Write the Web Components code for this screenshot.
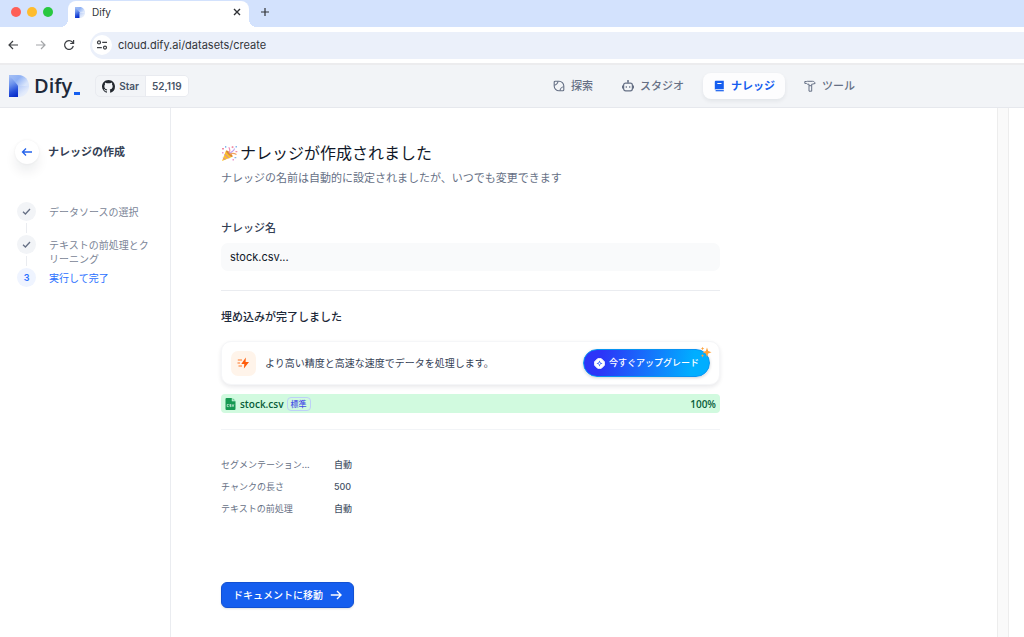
<!DOCTYPE html>
<html lang="ja">
<head>
<meta charset="utf-8">
<meta name="viewport" content="width=device-width, initial-scale=1">
<title>Dify</title>
<style>
  html, body { margin: 0; height: 100%; }
  body { font-family: Inter, "Noto Sans CJK JP", sans-serif; color: #1d2939; background: #fff; }
</style>
</head>
<body>
<dify-page></dify-page>
<script>
function define(name, html, setup) {
  const template = document.createElement('template');
  template.innerHTML = html;
  customElements.define(name, class extends HTMLElement {
    constructor() {
      super();
      this.attachShadow({ mode: 'open' }).append(template.content.cloneNode(true));
    }
    connectedCallback() { if (setup) setup(this, this.shadowRoot); }
  });
}

/* Product mark, shared by the tab and the header */
define('dify-mark', `
  <style>
    :host { display: block; flex: none; width: 20px; height: 22px; }
    svg { display: block; width: 100%; height: 100%; }
  </style>
  <svg viewBox="0 0 20 22" aria-hidden="true">
    <defs>
      <linearGradient id="stem" x1=".3" y1="0" x2=".5" y2="1"><stop offset="0" stop-color="#a5c0f5"/><stop offset=".4" stop-color="#6c92ec"/><stop offset=".75" stop-color="#2650da"/><stop offset="1" stop-color="#0a2fcb"/></linearGradient>
      <linearGradient id="bowl" x1="0" y1="0" x2="1" y2=".5"><stop offset="0" stop-color="#a5c0f5"/><stop offset=".5" stop-color="#8fb1f4"/><stop offset="1" stop-color="#d9e5fb"/></linearGradient>
      <linearGradient id="shade" x1="0" y1="0" x2=".8" y2="1"><stop offset="0" stop-color="#b4caf8"/><stop offset=".6" stop-color="#e0e9fb"/><stop offset="1" stop-color="#eff3fb"/></linearGradient>
    </defs>
    <path d="M9 11H20C20 17 16 22 9.500 22H9Z" fill="url(#shade)"/>
    <path d="M0 0H9.500C16 0 20 5 20 11H9L0 6Z" fill="url(#bowl)"/>
    <path d="M0 0 9 10.500V22H0Z" fill="url(#stem)"/>
  </svg>`);

define('browser-tabs', `
  <style>
    :host { display: flex; align-items: flex-end; height: 27px; background: #d3e2fd; color: #303236; }
    .lights { display: flex; gap: 6px; padding: 0 15px 0 11px; align-self: center; margin-bottom: 3px; }
    .lights i { width: 10px; height: 10px; border-radius: 50%; background: var(--c); }
    .tab { position: relative; display: flex; align-items: center; box-sizing: border-box; width: 181px; height: 26px;
      padding: 0 7px 4px; background: #fff; border-radius: 8px 8px 0 0; font-size: 10px; line-height: 14px; }
    .tab::before, .tab::after { content: ""; position: absolute; bottom: 0; width: 8px; height: 8px; }
    .tab::before { right: 100%; background: radial-gradient(circle at 0 0, transparent 8px, #fff 8px); }
    .tab::after { left: 100%; background: radial-gradient(circle at 100% 0, transparent 8px, #fff 8px); }
    dify-mark { width: 10px; height: 11px; margin-right: 7px; }
    span { flex: 1; }
    button { display: flex; padding: 0; border: 0; background: none; color: inherit; }
    .new { align-self: center; margin: 0 0 3px 11px; }
    svg { display: block; fill: none; stroke: currentColor; }
  </style>
  <div class="lights"><i style="--c:#fe5f57"></i><i style="--c:#febc2e"></i><i style="--c:#28c840"></i></div>
  <div class="tab"><dify-mark></dify-mark><span>Dify</span>
    <button aria-label="タブを閉じる"><svg width="10" height="10" viewBox="0 0 10 10" stroke-width="1.400"><path d="m2 2 6 6m0-6L2 8"/></svg></button>
  </div>
  <button class="new" aria-label="新しいタブ"><svg width="10" height="10" viewBox="0 0 10 10" stroke-width="1.200"><path d="M5 1v8M1 5h8"/></svg></button>`);

define('browser-toolbar', `
  <style>
    :host { display: flex; align-items: center; height: 36px; padding-left: 7px; border-bottom: 2px solid #ececee; color: #3c3f43; background: #fff; }
    button { display: flex; flex: none; padding: 0; margin-right: 16px; border: 0; background: none; color: inherit; }
    button[disabled] { color: #a4a6a9; }
    button.reload { margin-right: 15px; }
    svg { display: block; fill: none; stroke: currentColor; stroke-width: 1.200; }
    form { flex: 1; display: flex; align-items: center; height: 27px; padding-left: 2px; border-radius: 14px 0 0 14px; background: #ebf0fa; }
    .site { display: grid; place-items: center; width: 20px; height: 20px; margin-right: 6px; border-radius: 50%; background: #fff; }
    input { flex: 1; min-width: 0; height: 20px; padding: 0; border: 0; outline: 0; background: none; font: 11px/20px Inter, sans-serif; color: #33363b; }
  </style>
  <button aria-label="戻る"><svg width="12" height="12" viewBox="0 0 12 12"><path d="M11 6H2m4-4L2 6l4 4"/></svg></button>
  <button aria-label="進む" disabled><svg width="12" height="12" viewBox="0 0 12 12"><path d="M1 6h9M6 2l4 4-4 4"/></svg></button>
  <button class="reload" aria-label="再読み込み"><svg width="12" height="12" viewBox="0 0 12 12"><path d="M10.300 7A4.400 4.400 0 1 1 9.300 3L10.400 4.200M10.600 1v3.500H7.200"/></svg></button>
  <form>
    <div class="site"><svg width="12" height="12" viewBox="0 0 12 12"><circle cx="3" cy="3.400" r="1.500"/><path d="M6.200 3.400H11M1 8.600h4.800"/><circle cx="9" cy="8.600" r="1.500"/></svg></div>
    <input aria-label="アドレス" value="cloud.dify.ai/datasets/create" spellcheck="false">
  </form>`);

define('github-star', `
  <style>
    :host { display: block; }
    a { display: flex; height: 20px; border: 1px solid #e9ebf0; border-radius: 5px; overflow: hidden; font-size: 10px; font-weight: 600; line-height: 20px; color: #475467; text-decoration: none; }
    span { display: flex; align-items: center; gap: 4px; padding: 0 6px; }
    .count { background: #fff; border-left: 1px solid #e9ebf0; }
    svg { display: block; fill: #24292f; }
  </style>
  <a href="#"><span><svg width="13" height="13" viewBox="0 0 16 16"><path d="M8 0C3.580 0 0 3.580 0 8c0 3.540 2.290 6.530 5.470 7.590.4.070.55-.17.55-.38 0-.19-.01-.82-.01-1.490-2.010.37-2.530-.49-2.690-.94-.09-.23-.48-.94-.82-1.130-.28-.15-.68-.52-.01-.53.63-.01 1.080.58 1.230.82.72 1.210 1.870.87 2.330.66.07-.52.28-.87.51-1.070-1.780-.2-3.640-.89-3.640-3.950 0-.87.31-1.590.82-2.150-.08-.2-.36-1.020.08-2.120 0 0 .67-.21 2.200.82.64-.18 1.320-.27 2-.27s1.360.09 2 .27c1.530-1.040 2.200-.82 2.200-.82.44 1.100.16 1.920.08 2.120.51.56.82 1.270.82 2.150 0 3.070-1.870 3.750-3.650 3.950.29.25.54.73.54 1.480 0 1.070-.01 1.930-.01 2.200 0 .21.15.46.55.38A8.010 8.010 0 0 0 16 8c0-4.420-3.580-8-8-8Z"/></svg>Star</span><span class="count">52,119</span></a>`);

define('nav-item', `
  <style>
    :host { display: block; color: #667085; }
    :host([active]) { color: #155eef; }
    a { display: flex; align-items: center; gap: 6px; height: 26px; padding: 0 10px; border-radius: 8px; color: inherit; font-size: 11px; font-weight: 500; line-height: 16px; text-decoration: none; white-space: nowrap; }
    :host([active]) a { background: #fdfdfe; box-shadow: 0 2px 4px #10182812; font-weight: 700; }
    ::slotted(svg) { display: block; width: 12px; height: 12px; fill: none; stroke: currentColor; }
  </style>
  <a href="#"><slot name="icon"></slot><slot></slot></a>`,
  (host, root) => { if (host.hasAttribute('active')) root.querySelector('a').setAttribute('aria-current', 'page'); });

define('app-header', `
  <style>
    :host { display: flex; align-items: center; height: 42px; padding: 0 159px 0 9px; border-bottom: 1px solid #e6e8ed; background: #f2f4f7; }
    .brand { display: flex; align-items: center; gap: 5px; margin-right: 15px; text-decoration: none; }
    .word { display: flex; align-items: flex-end; gap: 2px; font-family: "Open Sans", sans-serif; font-size: 20px; font-weight: 600; line-height: 24px; color: #1d2939; }
    .word i { width: 6px; height: 3px; margin-bottom: 3px; background: #155eef; }
    nav { display: flex; gap: 9px; margin-left: auto; }
  </style>
  <a class="brand" href="#"><dify-mark></dify-mark><span class="word">Dify<i></i></span></a>
  <github-star></github-star>
  <nav>
    <nav-item><svg slot="icon" viewBox="0 0 12 12" stroke-width="1.100"><path d="M1.200 4.500V2.200a1 1 0 0 1 1-1H6a4.800 4.800 0 0 1 4.800 4.800v3.800a1 1 0 0 1-1 1H6A4.800 4.800 0 0 1 1.200 6Z"/><path d="M1.400 5.200C3 5 4.800 3.200 5 1.400M7 10.600C7.200 8.800 9 7 10.600 6.800"/></svg>探索</nav-item>
    <nav-item><svg slot="icon" viewBox="0 0 12 12" stroke-width="1.200"><rect x="1.600" y="3.200" width="8.800" height="7.600" rx="2"/><path d="M6 3.200V.8M.4 5.500v3M11.600 5.500v3M4.300 6.200v1.500M7.700 6.200v1.500M5 .8h2"/></svg>スタジオ</nav-item>
    <nav-item active><svg slot="icon" viewBox="0 0 12 12"><path d="M2.500.800h8.300v8.400H2.700a1 1 0 0 0-.9.500V2A1.200 1.200 0 0 1 2.500.800Z" fill="currentColor" stroke="none"/><path d="M4.300 3.500h4.200" stroke="#fff"/><path d="M10.800 10.700H2.600" stroke-width="1.200"/></svg>ナレッジ</nav-item>
    <nav-item><svg slot="icon" viewBox="0 0 12 12" stroke-width="1"><path d="M3.300 1.300h5.200c1.500 0 2.300.8 2.600 2.200L8.200 4.200H7.700v7H5V4.200H3.300L2.500 3.400H.8V1.500h1.500ZM5 5.700h2.500"/></svg>ツール</nav-item>
  </nav>`);

define('step-item', `
  <style>
    :host { display: flex; gap: 13px; min-height: 33px; color: #7a8496; font-size: 10px; line-height: 14px; }
    :host([current]) { color: #2970ff; }
    .rail { display: flex; flex-direction: column; align-items: center; gap: 2px; flex: none; width: 19px; }
    .dot { display: grid; place-items: center; width: 19px; height: 19px; border-radius: 50%; background: #f2f4f7; font-size: 9px; font-weight: 600; }
    .dot svg { fill: none; stroke: #667085; stroke-width: 1.300; }
    .line { flex: 1; width: 1px; margin-bottom: 2px; background: #eaecf0; }
    .text { padding-top: 3px; }
    :host([current]) .dot { background: #eff4ff; }
    :host([current]) svg, :host([current]) .line, :host(:not([current])) .number { display: none; }
  </style>
  <div class="rail"><div class="dot"><svg width="9" height="9" viewBox="0 0 9 9"><path d="m1 4.800 2.400 2.200L8 2"/></svg><span class="number"></span></div><div class="line"></div></div>
  <div class="text"><slot></slot></div>`,
  (host, root) => { root.querySelector('.number').textContent = host.getAttribute('current') || ''; });

define('side-steps', `
  <style>
    :host { display: block; box-sizing: border-box; width: 171px; flex: none; padding: 32px 16px 0 15px; border-right: 1px solid #eaecf0; }
    header { display: flex; align-items: center; gap: 9px; }
    h2 { margin: 0; font-size: 11px; font-weight: 600; line-height: 16px; color: #344054; }
    button { display: grid; place-items: center; width: 24px; height: 24px; padding: 0; border: 0; border-radius: 50%; background: #fff; box-shadow: 0 8px 12px #10182812, 0 0 3px #1018280f; }
    svg { fill: none; stroke: #2463eb; stroke-width: 1.300; }
    .steps { padding: 38px 0 0 2px; }
  </style>
  <header><button aria-label="戻る"><svg width="12" height="12" viewBox="0 0 12 12"><path d="M11 6H1.500M5 2.500 1.500 6 5 9.500"/></svg></button><h2>ナレッジの作成</h2></header>
  <div class="steps">
    <step-item>データソースの選択</step-item>
    <step-item>テキストの前処理とクリーニング</step-item>
    <step-item current="3">実行して完了</step-item>
  </div>`);

define('name-field', `
  <style>
    :host { display: block; }
    label { display: block; font-size: 11px; font-weight: 500; line-height: 16px; color: #344054; }
    input { box-sizing: border-box; display: block; width: 100%; height: 28px; margin-top: 7px; padding: 0 9px; border: 0; border-radius: 7px; outline: 0; background: #f9fafb; color: #101828; font: 11px/16px Inter, "Noto Sans CJK JP", sans-serif; }
  </style>
  <label for="name">ナレッジ名</label>
  <input id="name" value="stock.csv...">`);

define('upgrade-card', `
  <style>
    :host { display: flex; align-items: center; box-sizing: border-box; height: 44px; padding: 0 9px; border: 1px solid #f5f6f8; border-radius: 10px; background: #fff; box-shadow: 0 2px 4px #10182818; }
    .zap { display: grid; place-items: center; flex: none; width: 25px; height: 25px; margin-right: 9px; border-radius: 7px; background: #fff4ea; }
    p { flex: 1; margin: 0; font-size: 10px; line-height: 16px; color: #344054; }
    button { position: relative; display: flex; align-items: center; justify-content: center; gap: 4px; flex: none; height: 28px; padding: 0 10px; border: 1px solid #0894f2; border-radius: 14px; background: linear-gradient(100deg, #2c35f8 15%, #00aeff 85%) border-box; color: #fff; font: 500 9px/14px Inter, "Noto Sans CJK JP", sans-serif; box-shadow: 0 1px 3px #10182830; }
    svg { display: block; }
    .spark { position: absolute; top: -4px; right: -3px; }
  </style>
  <div class="zap"><svg width="13" height="12" viewBox="0 0 13 12"><path d="M8.800.500 4.300 6.900h3L6.900 11.500l5.100-6.600H8.600Z" fill="#ff5c0a"/><path d="M.800 3h4.200M.500 6H3M1.500 9H5" fill="none" stroke="#ff7626" stroke-width="1.100"/></svg></div>
  <p>より高い精度と高速な速度でデータを処理します。</p>
  <button><svg width="11" height="11" viewBox="0 0 12 12"><path d="M4 .700h4L11.300 4v4L8 11.300H4L.700 8V4Z" fill="#fff" stroke="#fff" stroke-linejoin="round"/><path d="m6 2.700 1 2.200 2.300 1-2.300 1-1 2.300-1-2.300-2.300-1 2.300-1Z" fill="#315bfa"/><circle cx="6" cy="6" r="1" fill="#fff"/></svg>今すぐアップグレード<svg class="spark" width="12" height="12" viewBox="0 0 12 12" fill="#ffa33c"><path d="M7 1.500 8.200 5l3.300 1.200-3.300 1.200L7 11 5.800 7.400 2.500 6.200 5.800 5Z"/><path d="m2.600.800.5 1.300 1.300.5-1.300.5-.5 1.300-.5-1.300-1.300-.5 1.300-.5ZM2.500 8l.5 1.200 1.200.5-1.200.5-.5 1.200-.5-1.200-1.200-.5L2 9.200Z"/></svg></button>`);

define('file-progress', `
  <style>
    :host { display: flex; align-items: center; height: 19px; padding: 0 4px; border-radius: 4px; background: #d1fadf; color: #085d3a; font-family: "Open Sans", "Noto Sans CJK JP", sans-serif; font-size: 10px; font-weight: 600; line-height: 14px; }
    svg { flex: none; margin-right: 4px; }
    .tag { margin-left: 3px; padding: 0 3px; border: 1px solid #bdd0f7; border-radius: 4px; font-size: 8px; font-weight: 500; line-height: 12px; color: #444ce7; }
    .rate { margin-left: auto; }
  </style>
  <svg width="11" height="12" viewBox="0 0 11 12"><path d="M1.500 0H6.800v3.200H10.500V11a1 1 0 0 1-1 1h-8a1 1 0 0 1-1-1V1a1 1 0 0 1 1-1Z" fill="#169951"/><path d="m7.500 0 3 2.600h-3Z" fill="#73cf9a"/><path d="M3.700 6.500H2.200V8.600h1.500M6.200 6.500H4.800v1h1.300v1.100H4.700M7.200 6.300 8 8.700l.8-2.400" fill="none" stroke="#fff" stroke-width=".6"/></svg>
  <span>stock.csv</span><span class="tag">標準</span><span class="rate">100%</span>`);

define('rule-info', `
  <style>
    :host { display: block; }
    dl { display: grid; grid-template-columns: 113px 1fr; margin: 0; font-size: 9px; line-height: 22px; }
    dt { color: #667085; }
    dd { margin: 0; font-weight: 500; color: #475467; }
  </style>
  <dl><dt>セグメンテーション...</dt><dd>自動</dd><dt>チャンクの長さ</dt><dd>500</dd><dt>テキストの前処理</dt><dd>自動</dd></dl>`);

define('primary-button', `
  <style>
    :host { display: flex; }
    button { display: flex; align-items: center; justify-content: center; gap: 7px; height: 26px; padding: 0 11px; border: 1px solid #1251d3; border-radius: 6px; background: #155eef; color: #fff; font: 500 10px/16px Inter, "Noto Sans CJK JP", sans-serif; box-shadow: 0 1px 2px #10182820; }
    svg { display: block; fill: none; stroke: currentColor; stroke-width: 1.400; }
  </style>
  <button><slot></slot><svg width="12" height="12" viewBox="0 0 12 12"><path d="M.8 6h10M7 2l4 4-4 4"/></svg></button>`);

define('created-panel', `
  <style>
    :host { display: block; flex: 1; min-width: 0; padding: 34px 50px 29px; }
    .content { max-width: 499px; }
    h1 { display: flex; align-items: center; gap: 2px; margin: 0; font-size: 16px; font-weight: 400; line-height: 22px; color: #101828; }
    p { margin: 6px 0 34px; font-size: 11px; line-height: 16px; color: #667085; }
    hr { height: 1px; margin: 0; border: 0; background: #eaecf0; }
    .first { margin-top: 19px; }
    h2 { margin: 18px 0 16px; font-size: 11px; font-weight: 500; line-height: 16px; color: #1d2939; }
    file-progress { margin: 9px 0 16px; }
    .faint { background: #f2f4f7; }
    rule-info { margin: 24px 0 62px; }
  </style>
  <div class="content">
    <h1><svg width="17" height="17" viewBox="0 0 17 17" aria-hidden="true"><path d="M5 5.500 1 16l10.500-4.200Z" fill="#fbc02d"/><path d="m3.600 9.200 4.200 4.200M2.200 12.800l2 2" stroke="#c77bd0" stroke-width="1"/><ellipse cx="8.300" cy="8.700" rx="1.300" ry="4.400" transform="rotate(-45 8.300 8.700)" fill="#d98a35"/><g fill="none" stroke-width="1.100"><path d="M8 8c1.500-2 .8-4-.2-5.800" stroke="#ee8db5"/><path d="M9 9c1-3 4-2 4.500-5.500" stroke="#b99aec"/><path d="M9 9c2.500-1 4-1 6.500.5" stroke="#f2a35f"/></g><g fill="#f08ba3"><path d="M1 3h2v1.500H1zM11 1l1.800.8-.8 1.500-1.600-.8zM14.500 6h1.800v1.300h-1.800z"/></g><g fill="#83b8ef"><path d="M4 1h1.300v1.800H4zM13.500 12h1.800v1.300h-1.800zM14.500 1H16v1.500h-1.500z"/></g><path d="M1 7h1.500v1.500H1zM11.500 14h1.500v1.500h-1.500z" fill="#e99ad0"/></svg>ナレッジが作成されました</h1>
    <p>ナレッジの名前は自動的に設定されましたが、いつでも変更できます</p>
    <name-field></name-field>
    <hr class="first">
    <h2>埋め込みが完了しました</h2>
    <upgrade-card></upgrade-card>
    <file-progress></file-progress>
    <hr class="faint">
    <rule-info></rule-info>
    <primary-button>ドキュメントに移動</primary-button>
  </div>`);

define('dify-page', `
  <style>
    :host { display: flex; flex-direction: column; min-height: 100vh; }
    main { flex: 1; display: flex; }
    .gutter { box-sizing: border-box; width: 12px; border: solid #ededed; border-width: 0 1px; background: #fafafa; }
    .edge { width: 15px; }
  </style>
  <browser-tabs></browser-tabs>
  <browser-toolbar></browser-toolbar>
  <app-header></app-header>
  <main><side-steps></side-steps><created-panel></created-panel><div class="gutter"></div><div class="edge"></div></main>`);
</script>
</body>
</html>
